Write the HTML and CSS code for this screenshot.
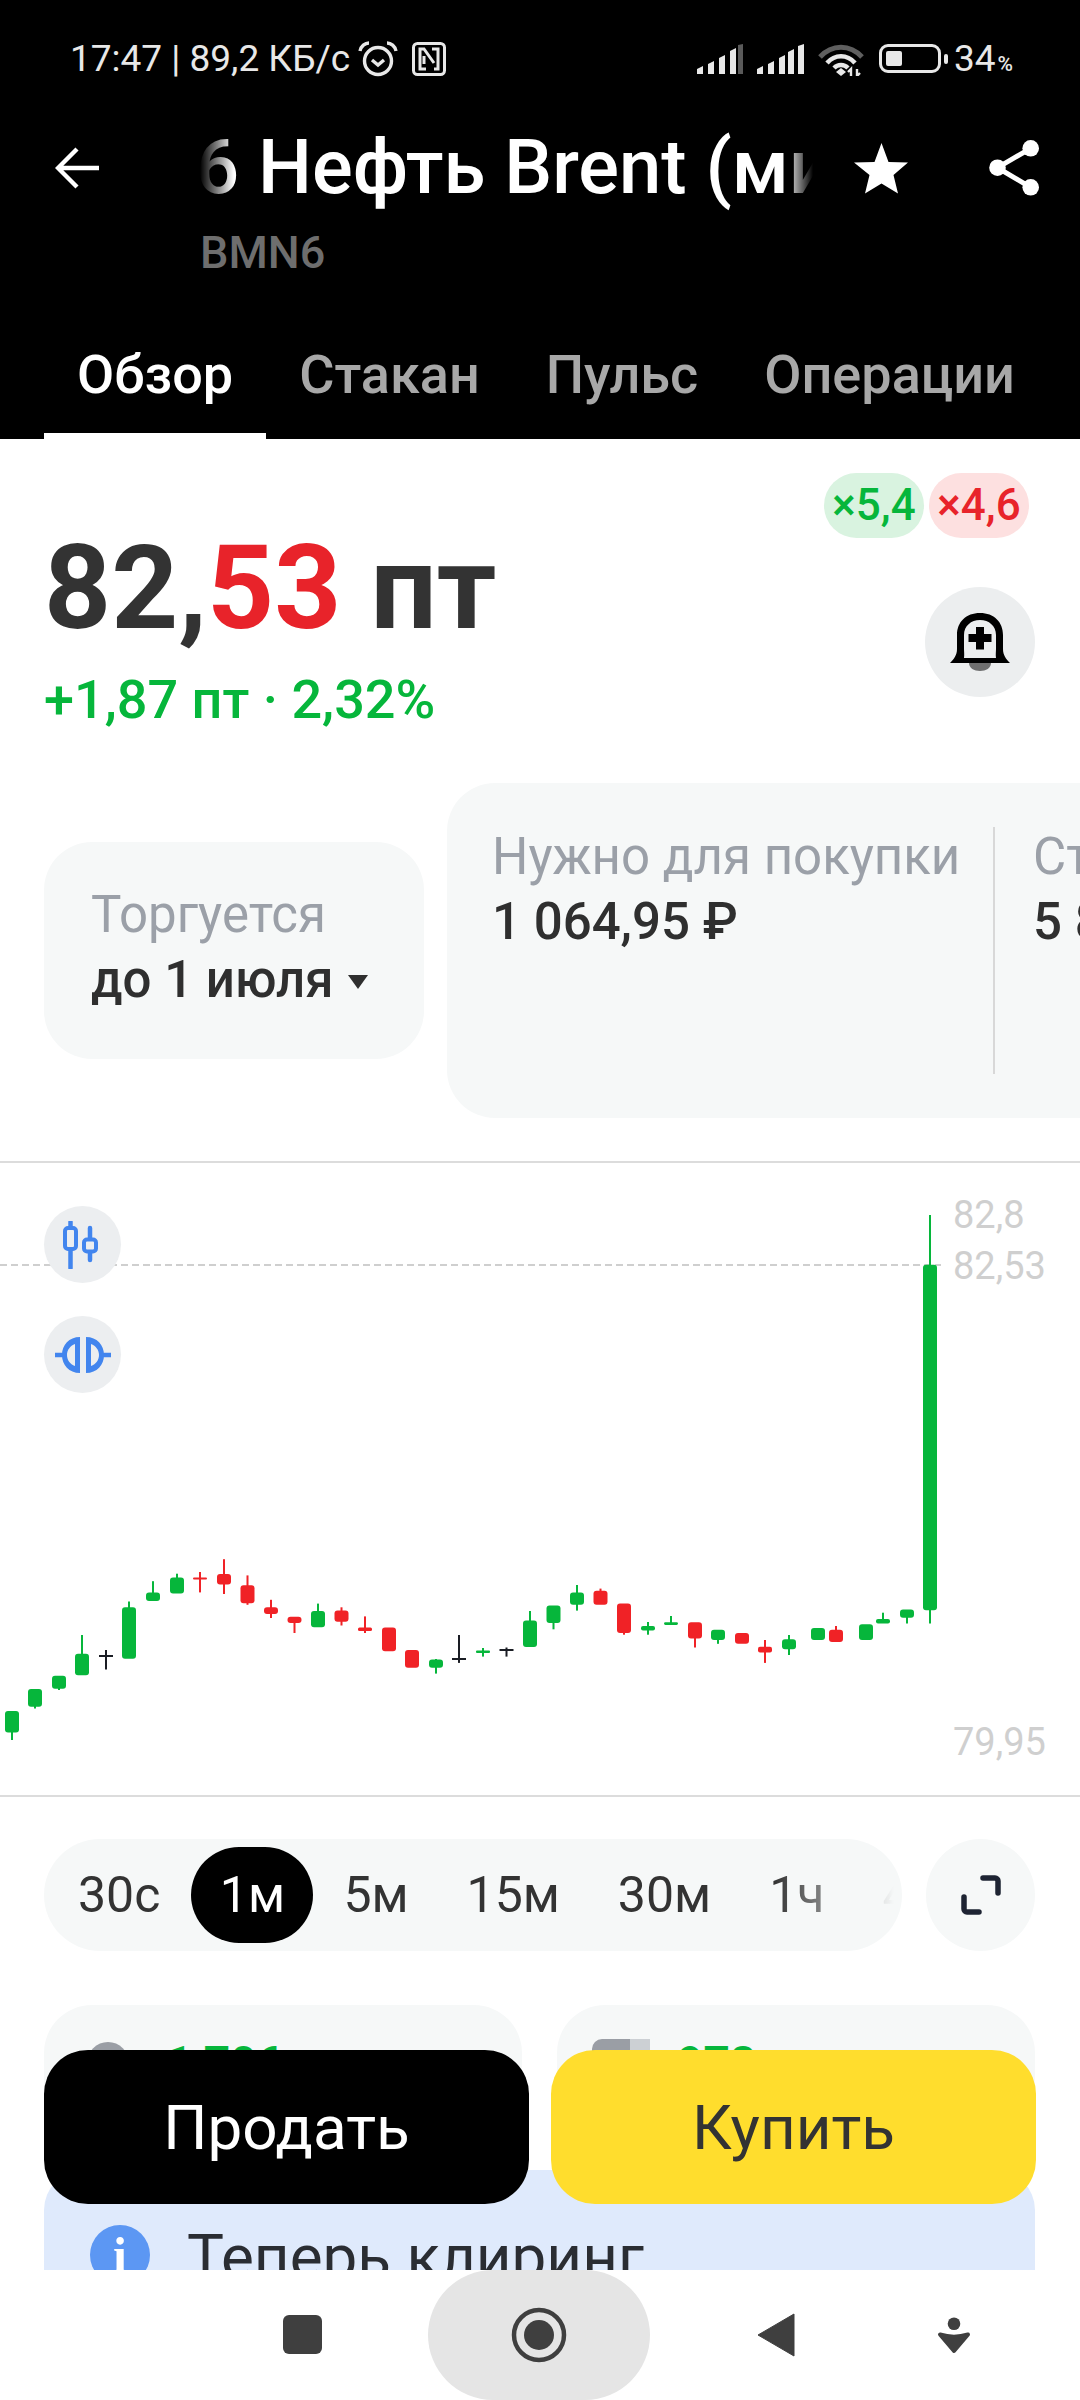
FILE: index.html

```html
<!DOCTYPE html>
<html lang="ru">
<head>
  <meta charset="UTF-8" />
  <meta name="viewport" content="width=device-width, initial-scale=1.0"/>
  <title>Нефть Brent</title>
  <link rel="stylesheet" href="styles.css">
</head>
<body>
  <div class="screen">
    <header class="top">
      <div class="status">
        <div class="status-left">
          <span>17:47 | 89,2 КБ/с</span>
          <svg class="ic-alarm" viewBox="0 0 40 36" width="40" height="36"><circle cx="20" cy="20" r="13.5" fill="none" stroke="#e8e8e8" stroke-width="3.4"/><path d="M14 19l6 5 6-5" fill="none" stroke="#e8e8e8" stroke-width="3.4"/><path d="M2 10C3 5 7 2 11 2M38 10C37 5 33 2 29 2" fill="none" stroke="#e8e8e8" stroke-width="3.4"/></svg>
          <svg class="ic-nfc" viewBox="0 0 34 34" width="34" height="34"><rect x="1.5" y="1.5" width="31" height="31" rx="4" fill="none" stroke="#e8e8e8" stroke-width="3"/><path d="M20 7h6v20h-4M14 27H8V7h4l10 14M12 14v8" fill="none" stroke="#e8e8e8" stroke-width="3"/></svg>
        </div>
        <div class="status-right">
          <svg viewBox="0 0 47 30" width="47" height="30"><path d="M0 30v-5l6-3v8zM11 30V20l6-3v13zM22 30V14l6-3v19z" fill="#e8e8e8"/><path d="M33 30V7l6-3v26z" fill="#e8e8e8"/><path d="M41 30V1l5-1v30z" fill="#5a5a5a"/></svg>
          <svg class="sig2" viewBox="0 0 47 30" width="47" height="30"><path d="M0 30v-5l6-3v8zM11 30V20l6-3v13zM22 30V14l6-3v19zM31 30V8l6-3v25zM41 30V2l6-2v30z" fill="#e8e8e8"/></svg>
          <svg class="ic-wifi" viewBox="0 0 46 33" width="46" height="33"><path d="M2 14C14 1 32 1 44 14" fill="none" stroke="#5f5f5f" stroke-width="5"/><path d="M9 20C17 11 29 11 37 20" fill="none" stroke="#e8e8e8" stroke-width="4.5"/><path d="M16 25C20 21 26 21 30 25" fill="none" stroke="#e8e8e8" stroke-width="4.5"/><path d="M18 29l5-4 5 4-5 4z" fill="#e8e8e8"/><path d="M33 33v-7l-3 3M39 26v7l3-3" fill="none" stroke="#e8e8e8" stroke-width="2.4"/></svg>
          <div class="battery"><div class="battery-fill"></div></div>
          <div class="battery-nub"></div>
          <span class="pct">34<small>%</small></span>
        </div>
      </div>
      <div class="titlebar">
        <svg class="ic-back" viewBox="0 0 46 42" width="46" height="42"><path d="M44 21H4M22 2L3 21l19 19" fill="none" stroke="#fff" stroke-width="4.4"/></svg>
        <div class="title-box">
          <div class="title-clip"><div class="title">6 Нефть Brent (мини)</div></div>
          <div class="ticker">BMN6</div>
        </div>
        <svg class="ic-star" viewBox="0 0 54 51" width="54" height="51"><path d="M27.5 0l7 19 19.5.5-14.5 12.5 4.5 18.600-16.5-10-16.5 10 4.5-18.600L0 19.5 20.5 19z" fill="#fff"/></svg>
        <svg class="ic-share" viewBox="0 0 50 56" width="50" height="56"><path d="M41.7 8.3L8.5 27.7l33.2 19.6" fill="none" stroke="#fff" stroke-width="5"/><circle cx="41.7" cy="8.3" r="8.3" fill="#fff"/><circle cx="8.5" cy="27.7" r="8.3" fill="#fff"/><circle cx="41.7" cy="47.3" r="8.3" fill="#fff"/></svg>
      </div>
      <nav class="tabs">
        <div class="tab active">Обзор</div>
        <div class="tab">Стакан</div>
        <div class="tab">Пульс</div>
        <div class="tab">Операции</div>
      </nav>
    </header>

    <section class="quote">
      <div class="leverage">
        <span class="chip chip-long">×5,4</span>
        <span class="chip chip-short">×4,6</span>
      </div>
      <div class="price-row">
        <div class="price-col">
          <div class="price">82,<span class="red">53</span> пт</div>
          <div class="change">+1,87 пт · 2,32%</div>
        </div>
        <button class="bell">
          <svg viewBox="0 0 60 58" width="60" height="58"><path d="M19 50H41C41 55 36 58 30 58S19 55 19 50Z" fill="#6f6f6f"/><path fill-rule="evenodd" d="M0 50C4 46 7 42 7 36V22C7 9 16 0 30 0S53 9 53 22V36C53 42 56 46 60 50ZM14 45H46C45.5 42 46 38 46 36V22C46 13 39 7 30 7S14 13 14 22V36C14 38 14.5 42 14 45Z" fill="#000"/><path d="M26 14h8v7h7.5v8H34v7.5h-8V29h-7.5v-8H26z" fill="#000"/></svg>
        </button>
      </div>
    </section>

    <section class="info">
      <div class="info-card info-expiry">
        <div class="info-label">Торгуется</div>
        <div class="info-value">до 1 июля <span class="caret"></span></div>
      </div>
      <div class="info-card info-margin">
        <div class="margin-col">
          <div class="info-label">Нужно для покупки</div>
          <div class="info-value">1 064,95 ₽</div>
        </div>
        <div class="margin-col margin-next">
          <div class="info-label">Стоимость</div>
          <div class="info-value">5 870 ₽</div>
        </div>
      </div>
    </section>

    <section class="chart">
      <svg class="chart-svg" viewBox="0 1163 1080 633" width="1080" height="633">
        <line class="last-line" x1="0" y1="1265" x2="941" y2="1265"/>
        <g class="up">
          <rect x="11" y="1711" width="2" height="29"/><rect x="5" y="1711" width="14" height="21.5" rx="3"/>
          <rect x="34" y="1689" width="2" height="19.5"/><rect x="28" y="1689" width="14" height="17.8" rx="3"/>
          <rect x="58" y="1676" width="2" height="14"/><rect x="52" y="1675.7" width="14" height="13" rx="3"/>
          <rect x="81" y="1635" width="2" height="30"/><rect x="75" y="1653.7" width="14" height="21.6" rx="3"/>
          <rect x="128" y="1601.5" width="2" height="20"/><rect x="122" y="1607.3" width="14" height="51.4" rx="3"/>
          <rect x="152" y="1581.2" width="2" height="15"/><rect x="146" y="1592.4" width="14" height="8.6" rx="3"/>
          <rect x="176" y="1573.7" width="2" height="10"/><rect x="170" y="1577.5" width="14" height="16.1" rx="3"/>
          <rect x="317" y="1603.6" width="2" height="12"/><rect x="311" y="1611" width="14" height="16.2" rx="3"/>
          <rect x="435" y="1659" width="2" height="14.6"/><rect x="429" y="1659.5" width="14" height="8.3" rx="3"/>
          <rect x="482" y="1648" width="2" height="8.6"/><rect x="476" y="1650.4" width="14" height="2.5" rx="1"/>
          <rect x="529" y="1611" width="2" height="16"/><rect x="523" y="1620.6" width="14" height="26.4" rx="3"/>
          <rect x="552.5" y="1610" width="2" height="19.3"/><rect x="546.5" y="1605.6" width="14" height="17.4" rx="3"/>
          <rect x="576" y="1585" width="2" height="25.6"/><rect x="570" y="1592.4" width="14" height="12.4" rx="3"/>
          <rect x="647" y="1622" width="2" height="12.7"/><rect x="641" y="1626" width="14" height="4.5" rx="2"/>
          <rect x="670" y="1616" width="2" height="8"/><rect x="664" y="1622.2" width="14" height="2.8" rx="1.4"/>
          <rect x="717" y="1635" width="2" height="8.8"/><rect x="711" y="1629.7" width="14" height="10.3" rx="3"/>
          <rect x="788" y="1635" width="2" height="20"/><rect x="782" y="1639.2" width="14" height="10" rx="3"/>
          <rect x="811" y="1628" width="14" height="12" rx="3"/>
          <rect x="859" y="1624.3" width="14" height="15.7" rx="3"/>
          <rect x="882" y="1612.7" width="2" height="8"/><rect x="876" y="1619" width="14" height="4.5" rx="2"/>
          <rect x="906" y="1612" width="2" height="11.5"/><rect x="900" y="1609.4" width="14" height="8.3" rx="3"/>
          <rect x="929" y="1215" width="2" height="408.5"/><rect x="923" y="1264.8" width="14" height="345.4" rx="3"/>
        </g>
        <g class="down">
          <rect x="199" y="1572" width="2" height="20.4"/><rect x="193" y="1577.5" width="14" height="2" rx="1"/>
          <rect x="223" y="1559.2" width="2" height="34.8"/><rect x="217" y="1574" width="14" height="10.5" rx="3"/>
          <rect x="246.5" y="1575.4" width="2" height="29.4"/><rect x="240.5" y="1585.3" width="14" height="17.9" rx="3"/>
          <rect x="270" y="1599.8" width="2" height="18.2"/><rect x="264" y="1607.3" width="14" height="6.7" rx="3"/>
          <rect x="293.5" y="1617" width="2" height="16"/><rect x="287.5" y="1616.8" width="14" height="6.2" rx="3"/>
          <rect x="340.5" y="1607.3" width="2" height="18.2"/><rect x="334.5" y="1610.6" width="14" height="11.2" rx="3"/>
          <rect x="364" y="1616.4" width="2" height="16.6"/><rect x="358" y="1627.6" width="14" height="3.4" rx="1.5"/>
          <rect x="382" y="1627.6" width="14" height="23.6" rx="3"/>
          <rect x="405" y="1650" width="14" height="17.8" rx="3"/>
          <rect x="599.5" y="1588.6" width="2" height="5"/><rect x="593.5" y="1590.7" width="14" height="14.1" rx="3"/>
          <rect x="623" y="1625" width="2" height="9.7"/><rect x="617" y="1603.6" width="14" height="29.4" rx="3"/>
          <rect x="694" y="1630" width="2" height="17.5"/><rect x="688" y="1622.2" width="14" height="16.2" rx="3"/>
          <rect x="735" y="1633" width="14" height="10.8" rx="3"/>
          <rect x="764" y="1640" width="2" height="22.9"/><rect x="758" y="1646.7" width="14" height="5.8" rx="2"/>
          <rect x="835" y="1626" width="2" height="6"/><rect x="829" y="1629.7" width="14" height="12.3" rx="3"/>
        </g>
        <g class="flat">
          <rect x="105" y="1650" width="2" height="19.5"/><rect x="99" y="1655" width="14" height="2"/>
          <rect x="458" y="1635" width="2" height="27.9"/><rect x="452" y="1658" width="14" height="2"/>
          <rect x="505.5" y="1647.5" width="2" height="9.1"/><rect x="499.5" y="1649" width="14" height="2"/>
        </g>
        <text class="axis" x="953" y="1228">82,8</text>
        <text class="axis" x="953" y="1279">82,53</text>
        <text class="axis" x="953" y="1755">79,95</text>
      </svg>
      <button class="chart-btn">
        <svg viewBox="0 0 40 48" width="40" height="48"><path d="M7.5 1v46M27 7v32" stroke="#4285ee" stroke-width="4.5" stroke-linecap="round" fill="none"/><rect x="2" y="7" width="11" height="21" rx="3" fill="#eceef0" stroke="#4285ee" stroke-width="4"/><rect x="21" y="18.5" width="12" height="12" rx="3" fill="#eceef0" stroke="#4285ee" stroke-width="4"/></svg>
      </button>
      <button class="chart-btn chart-btn-2">
        <svg viewBox="0 0 56 36" width="56" height="36"><path d="M0 18h8M48 18h8" stroke="#4285ee" stroke-width="4.5" fill="none"/><path d="M25 0v36C14 36 7 28 7 18S14 0 25 0zM20 7C15 9 12 13 12 18s3 9 8 11z" fill="#4285ee" fill-rule="evenodd"/><path d="M31 0v36C42 36 49 28 49 18S42 0 31 0zM36 7c5 2 8 6 8 11s-3 9-8 11z" fill="#4285ee" fill-rule="evenodd"/></svg>
      </button>
    </section>

    <section class="periods">
      <div class="period-bar">
        <div class="period-list">
          <span class="period p30s">30с</span>
          <span class="period active">1м</span>
          <span class="period p5m">5м</span>
          <span class="period">15м</span>
          <span class="period">30м</span>
          <span class="period">1ч</span>
          <span class="period">4ч</span>
        </div>
      </div>
      <button class="expand">
        <svg viewBox="0 0 40 40" width="40" height="40"><path d="M22 3h12a3 3 0 0 1 3 3v12M3 22v12a3 3 0 0 0 3 3h12" fill="none" stroke="#1e2433" stroke-width="5.5" stroke-linecap="round"/></svg>
      </button>
    </section>

    <section class="stats">
      <div class="stat-card"><span class="stat-dot"></span><span class="stat-num">1 706</span></div>
      <div class="stat-card stat-card-right"><span class="stat-square"></span><span class="stat-num">978</span></div>
    </section>

    <section class="notice">
      <span class="notice-icon">i</span>
      <span class="notice-text">Теперь клиринг</span>
    </section>

    <div class="actions">
      <button class="btn btn-sell">Продать</button>
      <button class="btn btn-buy">Купить</button>
    </div>

    <nav class="sysnav">
      <div class="sys-pill"></div>
      <span class="sys-square"></span>
      <svg class="sys-home" viewBox="0 0 56 56" width="56" height="56"><circle cx="28" cy="28" r="25" fill="none" stroke="#3f3f3f" stroke-width="4.5"/><circle cx="28" cy="28" r="15" fill="#3f3f3f"/></svg>
      <svg class="sys-back" viewBox="0 0 38 44" width="38" height="44"><path d="M37 1v42L1 22z" fill="#3f3f3f" stroke="#3f3f3f" stroke-linejoin="round"/></svg>
      <svg class="sys-drop" viewBox="0 0 34 38" width="34" height="38"><circle cx="17" cy="7.7" r="6.3" fill="#3f3f3f"/><path d="M3 18.5Q17 23 31 18.5L17 35z" fill="#3f3f3f" stroke="#3f3f3f" stroke-width="4" stroke-linejoin="round"/></svg>
    </nav>
  </div>
</body>
</html>
```

FILE: styles.css

```css
* {
  box-sizing: border-box;
}
body {
  margin: 0;
  background: #fff;
  font-family: 'Roboto', 'Liberation Sans', sans-serif;
  color: #333;
}
button {
  border: none;
  padding: 0;
  font-family: inherit;
}
.screen {
  position: relative;
  width: 1080px;
  height: 2400px;
  overflow: hidden;
  background: #fff;
}

/* header */
.top {
  height: 439px;
  background: #000;
  color: #fff;
}
.status {
  display: flex;
  justify-content: space-between;
  padding: 41px 67px 0 70px;
  height: 120px;
  color: #e8e8e8;
  font-size: 37px;
  line-height: 36px;
}
.status-left, .status-right {
  display: flex;
  align-items: flex-start;
}
.ic-alarm {
  margin-left: 8px;
}
.ic-nfc {
  margin-left: 14px;
  margin-top: 1px;
}
.status-right svg {
  margin-top: 3px;
}
.status-right .sig2 {
  margin-left: 13px;
}
.status-right .ic-wifi {
  margin-left: 14px;
  margin-top: 2px;
}
.battery {
  width: 62px;
  height: 29px;
  margin: 3px 0 0 15px;
  border: 3px solid #e8e8e8;
  border-radius: 9px;
  padding: 4px;
}
.battery-fill {
  width: 16px;
  height: 100%;
  background: #e8e8e8;
  border-radius: 2px;
}
.battery-nub {
  width: 4px;
  height: 10px;
  margin: 13px 0 0 3px;
  background: #e8e8e8;
  border-radius: 2px;
}
.pct {
  margin-left: 6px;
}
.pct small {
  font-size: 21px;
  font-weight: 500;
  margin-left: 2px;
}
.titlebar {
  display: flex;
  align-items: flex-start;
  height: 170px;
}
.ic-back {
  margin: 27px 0 0 55px;
  flex: none;
}
.title-box {
  width: 613px;
  margin: -3px 0 0 99px;
}
.title-clip {
  height: 100px;
  overflow: hidden;
  -webkit-mask-image: linear-gradient(to right, transparent 0, #000 34px, #000 585px, transparent 613px);
  mask-image: linear-gradient(to right, transparent 0, #000 34px, #000 585px, transparent 613px);
}
.title {
  font-size: 76px;
  line-height: 100px;
  font-weight: 500;
  white-space: nowrap;
  margin-left: -4px;
}
.ticker {
  margin-top: 10px;
  font-size: 45px;
  line-height: 52px;
  font-weight: 500;
  color: #6e6e6e;
}
.ic-star {
  margin: 23px 0 0 41px;
  flex: none;
}
.ic-share {
  margin: 20px 0 0 81px;
  flex: none;
}
.tabs {
  display: flex;
  height: 149px;
  padding: 0 0 0 44px;
}
.tab {
  padding: 45px 33px 0 33px;
  font-size: 54px;
  line-height: 80px;
  font-weight: 500;
  color: #a8a8a8;
  white-space: nowrap;
}
.tab.active {
  color: #fff;
  border-bottom: 6px solid #fff;
}

/* price */
.quote {
  height: 344px;
  padding: 0 45px 0 44px;
}
.leverage {
  display: flex;
  justify-content: flex-end;
  gap: 5px;
  padding: 34px 6px 0 0;
}
.chip {
  width: 100px;
  height: 65px;
  border-radius: 33px;
  font-size: 44px;
  line-height: 65px;
  font-weight: 500;
  text-align: center;
}
.chip-long {
  background: #d9f3e0;
  color: #06b63b;
}
.chip-short {
  background: #fde0e0;
  color: #e8232a;
}
.price-row {
  display: flex;
  justify-content: space-between;
}
.price {
  margin-top: -5px;
  font-size: 117px;
  line-height: 110px;
  font-weight: 700;
  color: #333;
}
.red {
  color: #e8232a;
}
.change {
  margin-top: 27px;
  font-size: 54px;
  line-height: 60px;
  font-weight: 500;
  color: #06b63b;
}
.bell {
  width: 110px;
  height: 110px;
  margin-top: 49px;
  border-radius: 50%;
  background: #eceeef;
  display: flex;
  align-items: center;
  justify-content: center;
}

/* info cards */
.info {
  display: flex;
  align-items: center;
  gap: 23px;
  height: 380px;
  padding: 0 0 43px 44px;
  border-bottom: 2px solid #dcdcdc;
  overflow: hidden;
}
.info-card {
  flex: none;
  background: #f6f8f8;
}
.info-label {
  font-size: 51px;
  line-height: 60px;
  color: #9ba0a8;
  white-space: nowrap;
}
.info-value {
  font-size: 51px;
  line-height: 70px;
  font-weight: 500;
  color: #2f2f2f;
  white-space: nowrap;
}
.info-expiry {
  width: 380px;
  height: 217px;
  padding: 43px 0 0 47px;
  border-radius: 48px;
}
.caret {
  display: inline-block;
  width: 0;
  height: 0;
  margin-left: 2px;
  vertical-align: 8px;
  border-left: 10px solid transparent;
  border-right: 10px solid transparent;
  border-top: 14px solid #2f2f2f;
}
.info-margin {
  display: flex;
  height: 335px;
  width: 800px;
  padding: 44px 0 44px 45px;
  border-radius: 48px;
}
.margin-col {
  flex: none;
  width: 503px;
  border-right: 2px solid #d8d8d8;
}
.margin-next {
  width: 300px;
  padding-left: 38px;
  border: none;
}

/* chart */
.chart {
  position: relative;
  height: 634px;
  border-bottom: 2px solid #dcdcdc;
}
.chart-svg {
  display: block;
}
.up rect {
  fill: #06b63b;
}
.down rect {
  fill: #f02226;
}
.flat rect {
  fill: #1a1d24;
}
.last-line {
  stroke: #cfcfcf;
  stroke-width: 2;
  stroke-dasharray: 7 4;
}
.axis {
  font-size: 38px;
  fill: #cfcfcf;
}
.chart-btn {
  position: absolute;
  left: 44px;
  top: 43px;
  width: 77px;
  height: 77px;
  border-radius: 50%;
  background: #eceef0;
  display: flex;
  align-items: center;
  justify-content: center;
}
.chart-btn-2 {
  top: 153px;
}

/* periods */
.periods {
  display: flex;
  gap: 24px;
  padding: 42px 45px 0 44px;
}
.period-bar {
  width: 858px;
  height: 112px;
  border-radius: 56px;
  background: #f6f8f8;
  overflow: hidden;
}
.period-list {
  display: flex;
  align-items: center;
  height: 100%;
  padding-left: 4px;
  -webkit-mask-image: linear-gradient(to right, #000 730px, transparent 850px);
  mask-image: linear-gradient(to right, #000 730px, transparent 850px);
}
.period {
  flex: none;
  padding: 0 29px;
  font-size: 50px;
  line-height: 96px;
  color: #333;
}
.p30s {
  padding: 0 31px 0 30px;
}
.p5m {
  padding-left: 30px;
}
.period.active {
  width: 122px;
  padding: 0;
  text-align: center;
  background: #000;
  color: #fff;
  border-radius: 48px;
}
.expand {
  flex: none;
  width: 109px;
  height: 112px;
  border-radius: 50%;
  background: #f6f8f8;
  display: flex;
  align-items: center;
  justify-content: center;
}

/* cards behind the buttons */
.stats {
  display: flex;
  gap: 35px;
  padding: 54px 45px 0 44px;
}
.stat-card {
  flex: none;
  width: 478px;
  height: 140px;
  padding: 37px 0 0 43px;
  display: flex;
  gap: 37px;
  background: #f6f8f8;
  border-radius: 48px;
}
.stat-card-right {
  padding-left: 35px;
  gap: 27px;
}
.stat-dot {
  width: 42px;
  height: 42px;
  border-radius: 50%;
  background: #9a9ea5;
}
.stat-square {
  width: 58px;
  height: 56px;
  margin-top: -3px;
  border-radius: 10px 0 0 10px;
  background: linear-gradient(to right, #9a9ea5 65%, #ccd0d4 65%);
}
.stat-num {
  margin-top: -7px;
  font-size: 46px;
  line-height: 56px;
  font-weight: 700;
  color: #06b63b;
}
.notice {
  position: absolute;
  left: 44px;
  top: 2170px;
  width: 991px;
  height: 160px;
  padding: 55px 0 0 46px;
  display: flex;
  gap: 37px;
  background: #dfeafc;
  border-radius: 40px;
}
.notice-icon {
  width: 60px;
  height: 60px;
  border-radius: 50%;
  background: #5c97f3;
  color: #fff;
  font-family: 'Liberation Serif', serif;
  font-size: 50px;
  line-height: 60px;
  font-weight: 700;
  text-align: center;
}
.notice-text {
  margin-top: 2px;
  font-size: 62px;
  line-height: 60px;
  color: #2a2d33;
}

/* sell / buy */
.actions {
  position: absolute;
  left: 44px;
  top: 2050px;
  display: flex;
  gap: 22px;
}
.btn {
  width: 485px;
  height: 154px;
  border-radius: 44px;
  font-size: 62px;
}
.btn-sell {
  background: #000;
  color: #fff;
}
.btn-buy {
  background: #ffdd2d;
  color: #333;
}

/* android nav */
.sysnav {
  position: absolute;
  left: 0;
  top: 2270px;
  width: 1080px;
  height: 130px;
  background: #fff;
}
.sys-pill {
  position: absolute;
  left: 428px;
  top: 0;
  width: 222px;
  height: 130px;
  border-radius: 65px;
  background: #e5e5e5;
}
.sys-square {
  position: absolute;
  left: 283px;
  top: 45px;
  width: 39px;
  height: 39px;
  border-radius: 6px;
  background: #3f3f3f;
}
.sys-home {
  position: absolute;
  left: 511px;
  top: 37px;
}
.sys-back {
  position: absolute;
  left: 757px;
  top: 43px;
}
.sys-drop {
  position: absolute;
  left: 937px;
  top: 46px;
}
```
